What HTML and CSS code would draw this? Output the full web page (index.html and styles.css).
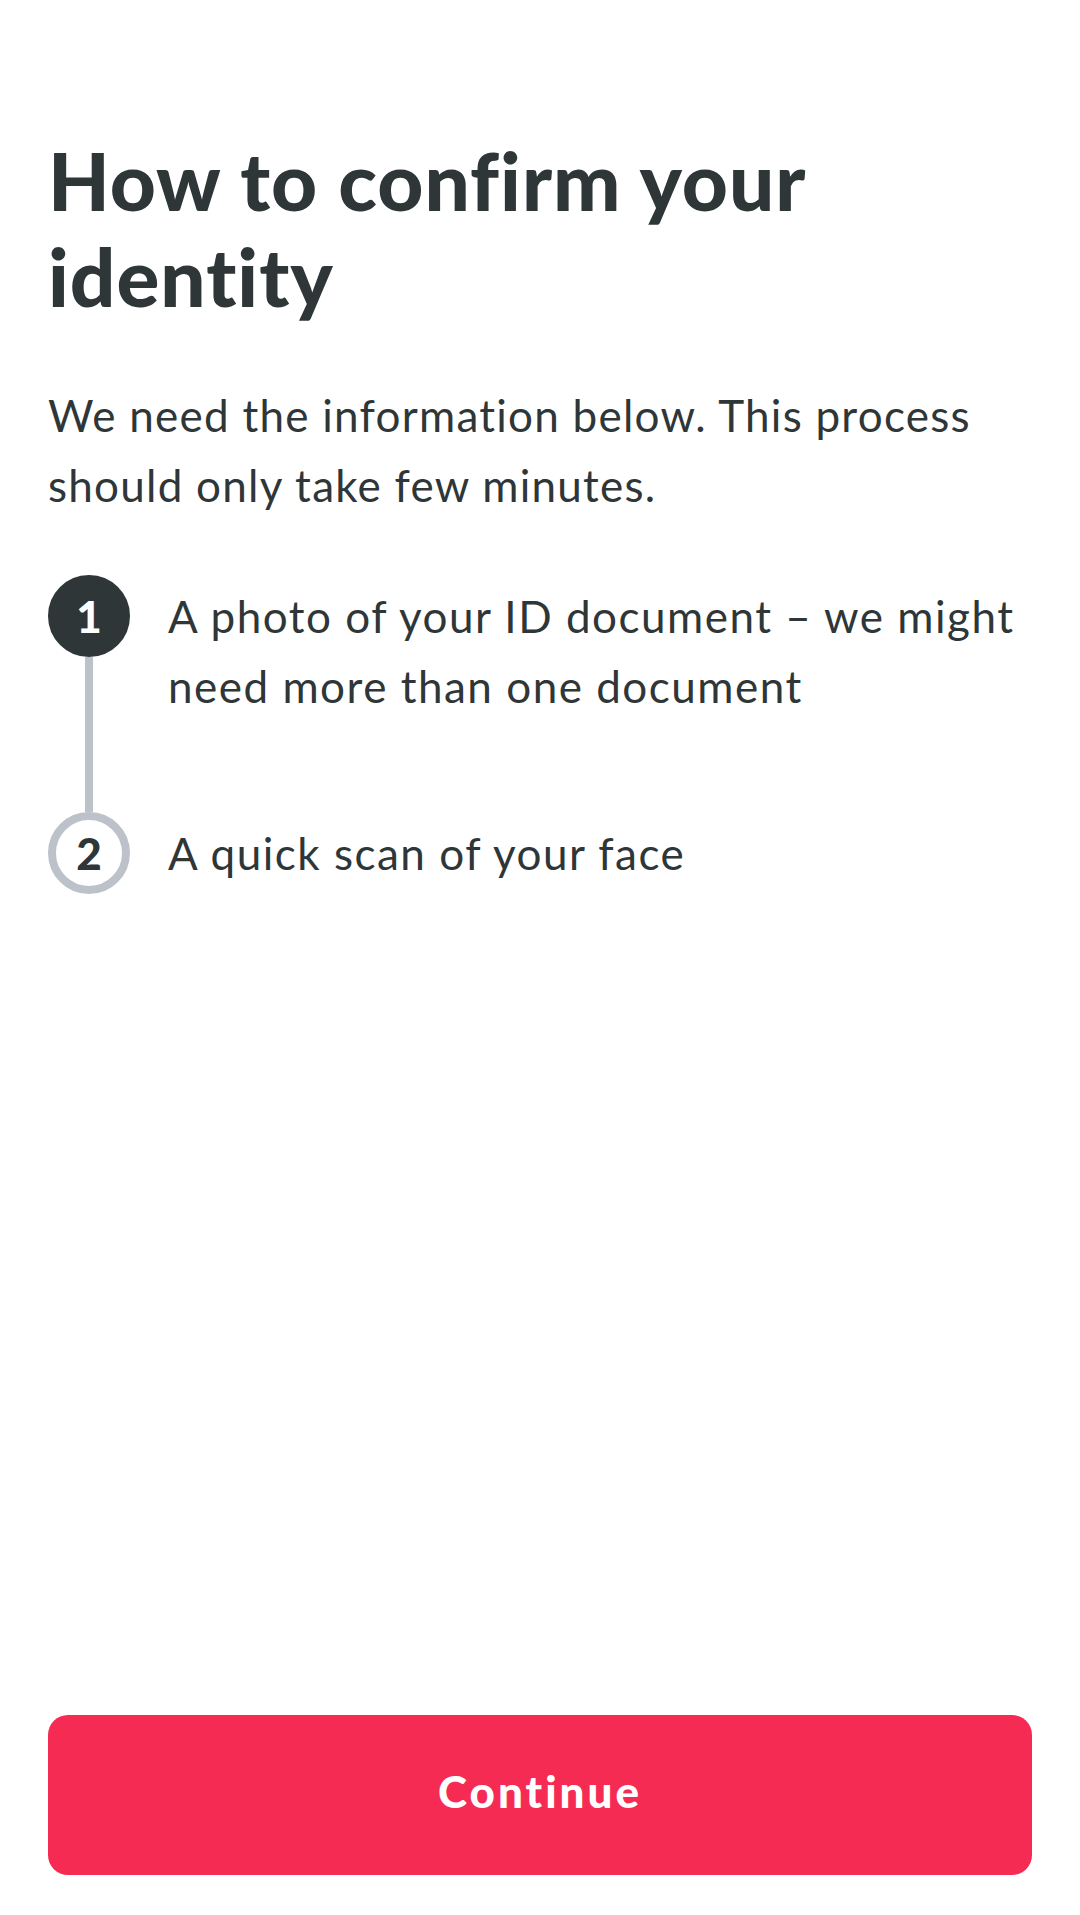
FILE: index.html
```html
<!DOCTYPE html>
<html lang="en">
<head>
  <meta charset="UTF-8" />
  <title>How to confirm your identity</title>
  <link rel="stylesheet" href="styles.css">
</head>
<body>
  <div class="page">
    <h1>How to confirm your identity</h1>

    <p class="lead">We need the information below. This process should only take few minutes.</p>

    <div class="steps">
      <div class="step">
        <div class="marker">
          <div class="num done">1</div>
          <div class="step-line"></div>
        </div>
        <div class="step-text first">A photo of your ID document &ndash; we might need more than one document</div>
      </div>
      <div class="step">
        <div class="marker">
          <div class="num">2</div>
        </div>
        <div class="step-text">A quick scan of your face</div>
      </div>
    </div>

    <button class="continue">Continue</button>
  </div>
</body>
</html>
```

FILE: styles.css
```css
html, body {
  margin: 0;
  background: #ffffff;
}
body {
  font-family: Lato, "Open Sans", sans-serif;
  color: #2f3638;
}
.page {
  box-sizing: border-box;
  min-height: 1915px;
  padding: 132px 48px 40px;
  display: flex;
  flex-direction: column;
}
h1 {
  margin: 0;
  font-size: 80px;
  line-height: 96px;
  font-weight: 900;
  letter-spacing: 1px;
}
.lead {
  margin: 56px 0 0;
  font-size: 44px;
  line-height: 70px;
  letter-spacing: 1.25px;
}
.steps {
  margin-top: 55px;
}
.step {
  display: flex;
  gap: 38px;
}
.marker {
  width: 82px;
  display: flex;
  flex-direction: column;
  align-items: center;
  flex-shrink: 0;
}
.num {
  box-sizing: border-box;
  width: 82px;
  height: 82px;
  border-radius: 50%;
  border: 8px solid #bcc1ca;
  background: #ffffff;
  color: #2f3638;
  font-size: 44px;
  font-weight: 900;
  display: flex;
  align-items: center;
  justify-content: center;
}
.num.done {
  background: #2f3638;
  border-color: #2f3638;
  color: #ffffff;
}
.step-line {
  flex: 1;
  width: 8px;
  background: #bcc1ca;
}
.step-text {
  padding-top: 6px;
  font-size: 44px;
  line-height: 70px;
  letter-spacing: 1.5px;
}
.step-text.first {
  padding-bottom: 91px;
}
.continue {
  margin-top: auto;
  height: 160px;
  padding: 0 0 8px;
  border: none;
  border-radius: 20px;
  background: #f62b53;
  color: #ffffff;
  font-family: Lato, "Open Sans", sans-serif;
  font-size: 44px;
  font-weight: 900;
  letter-spacing: 3px;
}
```
